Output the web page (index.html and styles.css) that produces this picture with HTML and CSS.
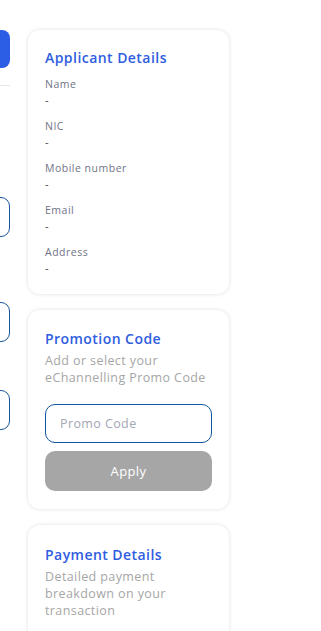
FILE: index.html
```html
<!DOCTYPE html>
<html>
<head>
<meta charset="utf-8">
<link rel="stylesheet" href="styles.css">
</head>
<body>
<div class="page">
  <div class="side">
    <div class="side-btn"></div>
    <div class="side-line"></div>
    <div class="side-box box1"></div>
    <div class="side-box box2"></div>
    <div class="side-box box3"></div>
  </div>
  <div class="cards">
    <section class="card">
      <h2 class="card-title">Applicant Details</h2>
      <div class="fields">
        <div class="field"><div class="label">Name</div><div class="value">-</div></div>
        <div class="field"><div class="label">NIC</div><div class="value">-</div></div>
        <div class="field"><div class="label">Mobile number</div><div class="value">-</div></div>
        <div class="field"><div class="label">Email</div><div class="value">-</div></div>
        <div class="field"><div class="label">Address</div><div class="value">-</div></div>
      </div>
    </section>
    <section class="card promo">
      <h2 class="card-title">Promotion Code</h2>
      <p class="card-sub">Add or select your eChannelling Promo Code</p>
      <input class="promo-input" type="text" placeholder="Promo Code">
      <button class="apply-btn" type="button">Apply</button>
    </section>
    <section class="card payment">
      <h2 class="card-title">Payment Details</h2>
      <p class="card-sub">Detailed payment breakdown on your transaction</p>
    </section>
  </div>
</div>
</body>
</html>
```
FILE: styles.css
```css
* { box-sizing: border-box; }
html, body { margin: 0; padding: 0; background: #fff; }
body {
  font-family: "Open Sans", "DejaVu Sans", sans-serif;
  overflow: hidden;
}
.page {
  display: flex;
  align-items: flex-start;
}
.side {
  width: 200px;
  margin-left: -190px;
  flex-shrink: 0;
  display: flex;
  flex-direction: column;
  padding-top: 30px;
}
.side-btn {
  height: 38px;
  background: #2c5de5;
  border-radius: 8px;
}
.side-line {
  height: 1px;
  background: #e6e6e6;
  margin-top: 17px;
}
.side-box {
  height: 40px;
  border: 1px solid #1a56a0;
  border-radius: 9px;
}
.box1 { margin-top: 111px; }
.box2 { margin-top: 65px; }
.box3 { margin-top: 48px; }
.cards {
  margin-left: 18px;
  width: 201px;
  flex-shrink: 0;
  display: flex;
  flex-direction: column;
  gap: 16px;
  padding-top: 30px;
}
.card {
  background: #fff;
  border-radius: 12px;
  box-shadow: 0 0 4px rgba(0,0,0,0.13);
  padding: 18px 17px 19px 17px;
}
.card-title {
  margin: 0;
  font-size: 14px;
  line-height: 19px;
  font-weight: 600;
  letter-spacing: 0.45px;
  color: #2f5de0;
}
.fields {
  display: flex;
  flex-direction: column;
  gap: 12px;
  margin-top: 10px;
}
.label {
  font-size: 10.5px;
  line-height: 15px;
  letter-spacing: 0.5px;
  color: #6f7386;
}
.value {
  font-size: 11px;
  line-height: 15px;
  color: #3a4460;
}
.promo { padding: 19px 17px 18px 17px; }
.card-sub {
  margin: 4px 0 0 0;
  font-size: 12.5px;
  line-height: 17px;
  letter-spacing: 0.4px;
  color: #a6a6a6;
}
.promo-input {
  display: block;
  width: 100%;
  height: 39px;
  margin-top: 18px;
  border: 1px solid #0d56a6;
  border-radius: 10px;
  padding: 0 14px;
  font-family: inherit;
  font-size: 12.5px;
  letter-spacing: 0.4px;
  color: #333;
  outline: none;
  background: #fff;
}
.promo-input::placeholder { color: #a3a6b4; }
.apply-btn {
  display: block;
  width: 100%;
  height: 40px;
  margin-top: 8px;
  border: none;
  border-radius: 10px;
  background: #a6a6a6;
  color: #fff;
  font-family: inherit;
  font-size: 13px;
  letter-spacing: 0.4px;
}
.payment { padding: 20px 17px 30px 17px; }
```
